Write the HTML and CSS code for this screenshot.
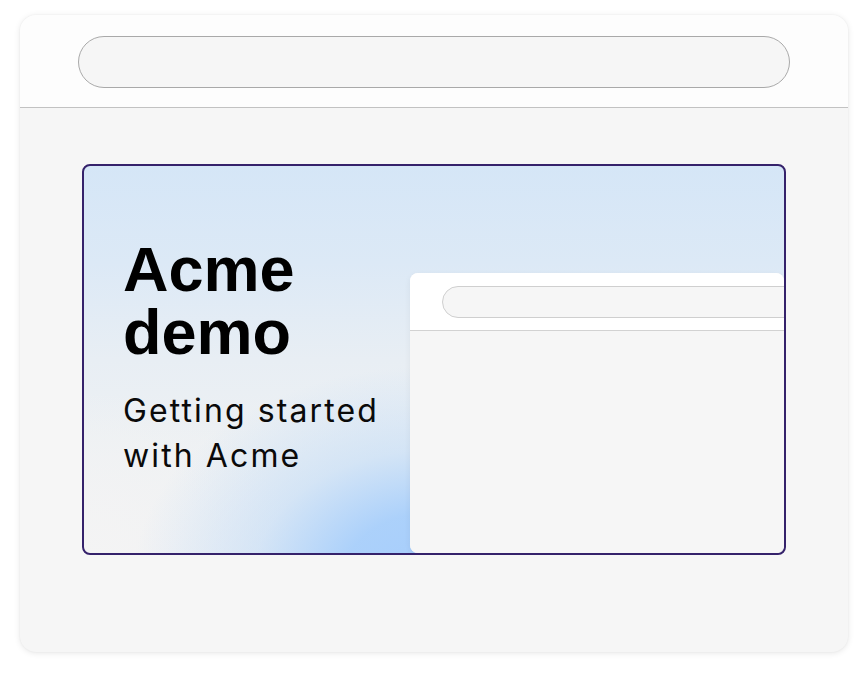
FILE: index.html
```html
<!DOCTYPE html>
<html lang="en">
<head>
<meta charset="utf-8">
<title>Acme demo</title>
<link rel="stylesheet" href="styles.css">
</head>
<body>
  <div class="window">
    <div class="topbar">
      <div class="urlbar"></div>
    </div>
    <div class="content">
      <div class="card">
        <div class="text">
          <h1 class="title">Acme<br>demo</h1>
          <p class="subtitle">Getting started<br>with Acme</p>
        </div>
        <div class="mini">
          <div class="mini-bar">
            <div class="mini-url"></div>
          </div>
          <div class="mini-body"></div>
        </div>
      </div>
    </div>
  </div>
</body>
</html>
```

FILE: styles.css
```css
* { box-sizing: border-box; }
html, body { margin: 0; padding: 0; }
body {
  background: #ffffff;
  width: 868px;
  height: 676px;
  padding: 15px 20px 0 20px;
  font-family: "Liberation Sans", Arial, sans-serif;
}
.window {
  width: 828px;
  height: 637px;
  border-radius: 16px;
  background: #f6f6f6;
  box-shadow: 0 1px 6px rgba(0, 0, 0, 0.10), 0 0 2px rgba(0, 0, 0, 0.05);
  overflow: hidden;
  display: flex;
  flex-direction: column;
}
.topbar {
  height: 93px;
  background: #fdfdfd;
  border-bottom: 1px solid #c2c2c2;
  padding: 21px 58px 0 58px;
  flex: none;
}
.urlbar {
  height: 52px;
  border: 1px solid #a9a9a9;
  border-radius: 26px;
  background: #f6f6f6;
}
.content {
  flex: 1;
  padding: 56px 62px 0 62px;
}
.card {
  height: 391px;
  border: 2px solid #35226b;
  border-radius: 8px;
  overflow: hidden;
  display: flex;
  background:
    radial-gradient(ellipse 300px 210px at 350px 410px, rgba(166, 205, 252, 1) 0%, rgba(168, 207, 251, 0.95) 30%, rgba(190, 218, 248, 0.55) 60%, rgba(220, 232, 245, 0) 100%),
    radial-gradient(ellipse 220px 170px at 0px 395px, rgba(244, 244, 244, 1) 0%, rgba(243, 243, 244, 0.6) 50%, rgba(240, 242, 244, 0) 100%),
    linear-gradient(to bottom, #d5e6f7 0%, #dce9f6 25%, #e8eef4 50%, #eef1f3 75%, #f1f2f3 100%);
}
.text {
  width: 326px;
  flex: none;
  padding: 72px 0 0 39px;
  color: #000;
}
.title {
  margin: 0;
  font-family: "Liberation Sans", Arial, sans-serif;
  font-weight: 700;
  font-size: 63px;
  line-height: 63px;
}
.subtitle {
  margin: 24px 0 0 0;
  font-family: Inter, "Liberation Sans", sans-serif;
  font-weight: 400;
  font-size: 32px;
  line-height: 45px;
  letter-spacing: 2.1px;
  color: #0a0a0a;
}
.mini {
  flex: 1;
  margin-top: 107px;
  border-radius: 8px;
  overflow: hidden;
  background: #f6f6f6;
  display: flex;
  flex-direction: column;
  box-shadow: 0 2px 6px rgba(0, 0, 0, 0.06);
}
.mini-bar {
  height: 58px;
  background: #ffffff;
  border-bottom: 1px solid #d2d2d2;
  padding: 13px 0 0 32px;
  flex: none;
}
.mini-url {
  width: 400px;
  height: 32px;
  border: 1px solid #cfcfcf;
  border-radius: 16px;
  background: #f6f6f6;
}
.mini-body {
  flex: 1;
  background: #f6f6f6;
}
```
